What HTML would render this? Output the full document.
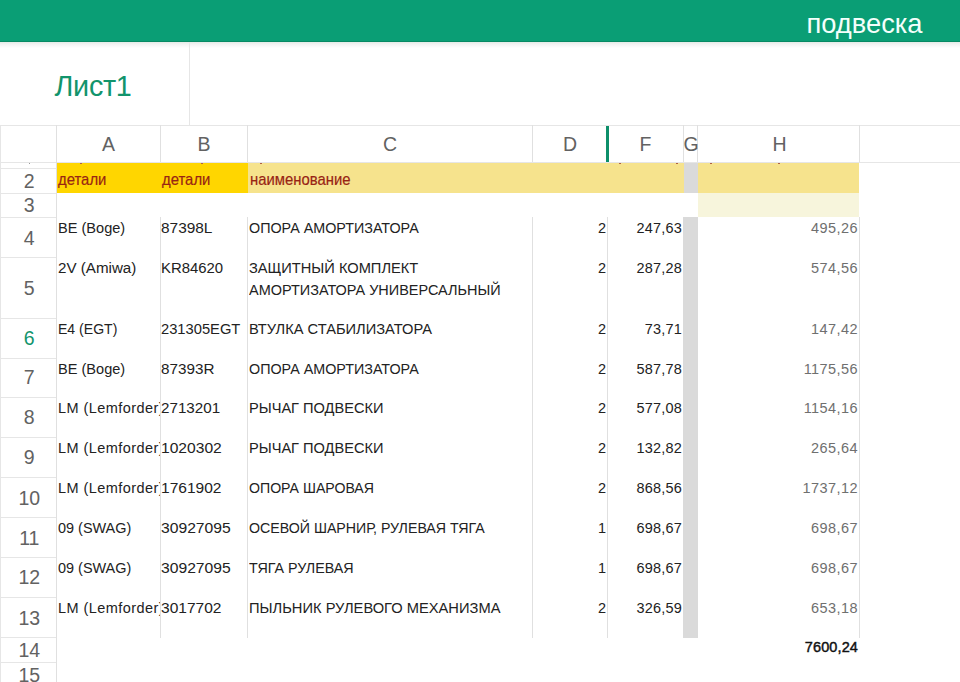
<!DOCTYPE html>
<html><head><meta charset="utf-8"><style>
html,body{margin:0;padding:0;}
body{width:960px;height:682px;overflow:hidden;position:relative;background:#fff;font-family:"Liberation Sans",sans-serif;}
div{position:absolute;box-sizing:border-box;}
.t{white-space:nowrap;line-height:17px;font-size:15.2px;color:#222;transform:scaleX(0.954);transform-origin:0 0;}
.r{text-align:right;transform-origin:100% 0;}
.hl{height:1px;background:#e6e6e6;}
.vl{width:1px;background:#e0e0e0;}
.ch{font-size:19.5px;color:#626262;line-height:22px;text-align:center;}
</style></head><body>

<div style="left:0;top:0;width:960px;height:42px;background:#0a9e75;"></div>
<div style="left:0;top:41px;width:960px;height:1px;background:#078a64;"></div>
<div style="left:0;top:42px;width:960px;height:6px;background:linear-gradient(#e4ebe7,#f3f3f3 40%,#ffffff);"></div>
<div style="left:806.5px;top:6.8px;font-size:27.3px;line-height:34px;color:#f4fffb;white-space:nowrap;">подвеска</div>
<div style="left:54.5px;top:68.5px;font-size:28.8px;line-height:34px;letter-spacing:-0.3px;color:#12946c;white-space:nowrap;">Лист1</div>
<div class="vl" style="left:189px;top:42px;height:83px;background:#e6e6e6;"></div>
<div class="hl" style="left:0;top:125px;width:960px;"></div>
<div class="hl" style="left:0;top:162px;width:960px;"></div>
<div class="vl" style="left:0;top:125px;height:557px;background:#e6e6e6;"></div>
<div class="vl" style="left:56px;top:125px;height:557px;"></div>
<div class="vl" style="left:160px;top:125px;height:37px;"></div>
<div class="vl" style="left:247px;top:125px;height:37px;"></div>
<div class="vl" style="left:532px;top:125px;height:37px;"></div>
<div class="vl" style="left:683px;top:125px;height:37px;"></div>
<div class="vl" style="left:697px;top:125px;height:37px;"></div>
<div class="vl" style="left:859px;top:125px;height:37px;"></div>
<div style="left:606px;top:126px;width:3px;height:36px;background:#0d8f6a;"></div>
<div class="ch" style="left:56.5px;top:133.3px;width:104.0px;">A</div>
<div class="ch" style="left:160.5px;top:133.3px;width:87.0px;">B</div>
<div class="ch" style="left:247.5px;top:133.3px;width:285.0px;">C</div>
<div class="ch" style="left:532.5px;top:133.3px;width:75.0px;">D</div>
<div class="ch" style="left:607.5px;top:133.3px;width:76.0px;">F</div>
<div class="ch" style="left:683.5px;top:133.3px;width:14.0px;">G</div>
<div class="ch" style="left:698.7px;top:133.3px;width:161.5px;">H</div>
<div class="hl" style="left:0;top:168px;width:56px;"></div>
<div class="hl" style="left:0;top:193px;width:56px;"></div>
<div class="ch" style="left:0.8px;top:169.3px;width:57px;height:24.80000000000001px;line-height:24.80000000000001px;color:#626262;">2</div>
<div class="hl" style="left:0;top:217px;width:56px;"></div>
<div class="ch" style="left:0.8px;top:194.10000000000002px;width:57px;height:23.899999999999977px;line-height:23.899999999999977px;color:#626262;">3</div>
<div class="hl" style="left:0;top:257px;width:56px;"></div>
<div class="ch" style="left:0.8px;top:218.0px;width:57px;height:40.0px;line-height:40.0px;color:#626262;">4</div>
<div class="hl" style="left:0;top:318px;width:56px;"></div>
<div class="ch" style="left:0.8px;top:258.0px;width:57px;height:60.30000000000001px;line-height:60.30000000000001px;color:#626262;">5</div>
<div class="hl" style="left:0;top:358px;width:56px;"></div>
<div class="ch" style="left:0.8px;top:318.3px;width:57px;height:40.10000000000002px;line-height:40.10000000000002px;color:#12946c;">6</div>
<div class="hl" style="left:0;top:397px;width:56px;"></div>
<div class="ch" style="left:0.8px;top:358.40000000000003px;width:57px;height:39.799999999999955px;line-height:39.799999999999955px;color:#626262;">7</div>
<div class="hl" style="left:0;top:437px;width:56px;"></div>
<div class="ch" style="left:0.8px;top:398.2px;width:57px;height:39.900000000000034px;line-height:39.900000000000034px;color:#626262;">8</div>
<div class="hl" style="left:0;top:477px;width:56px;"></div>
<div class="ch" style="left:0.8px;top:438.1px;width:57px;height:39.89999999999998px;line-height:39.89999999999998px;color:#626262;">9</div>
<div class="hl" style="left:0;top:517px;width:56px;"></div>
<div class="ch" style="left:0.8px;top:478.0px;width:57px;height:40.099999999999966px;line-height:40.099999999999966px;color:#626262;">10</div>
<div class="hl" style="left:0;top:557px;width:56px;"></div>
<div class="ch" style="left:0.8px;top:518.0999999999999px;width:57px;height:40.0px;line-height:40.0px;color:#626262;">11</div>
<div class="hl" style="left:0;top:597px;width:56px;"></div>
<div class="ch" style="left:0.8px;top:558.0999999999999px;width:57px;height:39.90000000000009px;line-height:39.90000000000009px;color:#626262;">12</div>
<div class="hl" style="left:0;top:637px;width:56px;"></div>
<div class="ch" style="left:0.8px;top:598.0px;width:57px;height:40.0px;line-height:40.0px;color:#626262;">13</div>
<div class="hl" style="left:0;top:662px;width:56px;"></div>
<div class="ch" style="left:0.8px;top:638.0px;width:57px;height:25.0px;line-height:25.0px;color:#626262;">14</div>
<div class="ch" style="left:0.8px;top:663.0px;width:57px;height:24.0px;line-height:24.0px;color:#626262;">15</div>
<div style="left:57px;top:163px;width:191px;height:30px;background:#ffd600;"></div>
<div style="left:248px;top:163px;width:436px;height:30px;background:#f6e38d;"></div>
<div style="left:698px;top:163px;width:161px;height:30px;background:#f6e38d;"></div>
<div style="left:698px;top:193px;width:161px;height:24px;background:#f7f5dc;"></div>
<div style="left:684px;top:163px;width:14px;height:30px;background:#dadada;"></div>
<div style="left:683.3px;top:217px;width:14.5px;height:420.5px;background:#dadada;"></div>
<div class="t" style="left:58px;top:171.2px;font-size:17px;transform:scaleX(0.875);transform-origin:0 0;color:#982414;-webkit-text-stroke:0.2px #982414;">детали</div>
<div class="t" style="left:161.5px;top:171.2px;font-size:17px;transform:scaleX(0.875);transform-origin:0 0;color:#982414;-webkit-text-stroke:0.2px #982414;">детали</div>
<div class="t" style="left:249.5px;top:171.2px;font-size:17px;transform:scaleX(0.875);transform-origin:0 0;color:#982414;-webkit-text-stroke:0.2px #982414;">наименование</div>
<div style="left:80px;top:163px;width:2px;height:1px;background:#b06040;"></div>
<div style="left:201px;top:163px;width:2px;height:1px;background:#b06040;"></div>
<div style="left:260px;top:163px;width:2px;height:1px;background:#b06040;"></div>
<div style="left:619px;top:163px;width:2px;height:1px;background:#b06040;"></div>
<div style="left:676px;top:163px;width:2px;height:1px;background:#b06040;"></div>
<div style="left:710px;top:163px;width:2px;height:1px;background:#b06040;"></div>
<div style="left:778px;top:163px;width:2px;height:1px;background:#b06040;"></div>
<div style="left:28.5px;top:162.5px;width:1.5px;height:1.5px;background:#999;"></div>
<div class="vl" style="left:160px;top:217px;height:421px;"></div>
<div class="vl" style="left:247px;top:217px;height:421px;"></div>
<div class="vl" style="left:532px;top:217px;height:421px;"></div>
<div class="vl" style="left:607px;top:217px;height:421px;"></div>
<div class="vl" style="left:859px;top:217px;height:421px;"></div>
<div class="t" style="left:57.8px;top:219.2px;width:106.93px;overflow:hidden;transform:scaleX(0.959);">BE (Boge)</div>
<div class="t" style="left:161px;top:219.2px;transform:scaleX(1.015);">87398L</div>
<div class="t" style="left:248.6px;top:219.2px;transform:scaleX(0.943);">ОПОРА АМОРТИЗАТОРА</div>
<div class="t r" style="left:540px;top:219.2px;width:66px;">2</div>
<div class="t r" style="left:610px;top:219.2px;width:72px;letter-spacing:0.2px;">247,63</div>
<div class="t r" style="left:700px;top:219.2px;width:158px;color:#6f6f6f;letter-spacing:0.45px;">495,26</div>
<div class="t" style="left:57.8px;top:259.2px;width:102.76px;overflow:hidden;transform:scaleX(0.998);">2V (Amiwa)</div>
<div class="t" style="left:161px;top:259.2px;transform:scaleX(0.981);">KR84620</div>
<div class="t" style="left:248.6px;top:259.2px;transform:scaleX(0.964);">ЗАЩИТНЫЙ КОМПЛЕКТ</div>
<div class="t" style="left:248.6px;top:280.5px;transform:scaleX(0.952);">АМОРТИЗАТОРА УНИВЕРСАЛЬНЫЙ</div>
<div class="t r" style="left:540px;top:259.2px;width:66px;">2</div>
<div class="t r" style="left:610px;top:259.2px;width:72px;letter-spacing:0.2px;">287,28</div>
<div class="t r" style="left:700px;top:259.2px;width:158px;color:#6f6f6f;letter-spacing:0.45px;">574,56</div>
<div class="t" style="left:57.8px;top:319.5px;width:110.86px;overflow:hidden;transform:scaleX(0.925);">E4 (EGT)</div>
<div class="t" style="left:161px;top:319.5px;transform:scaleX(0.969);">231305EGT</div>
<div class="t" style="left:248.6px;top:319.5px;transform:scaleX(0.965);">ВТУЛКА СТАБИЛИЗАТОРА</div>
<div class="t r" style="left:540px;top:319.5px;width:66px;">2</div>
<div class="t r" style="left:610px;top:319.5px;width:72px;letter-spacing:0.2px;">73,71</div>
<div class="t r" style="left:700px;top:319.5px;width:158px;color:#6f6f6f;letter-spacing:0.45px;">147,42</div>
<div class="t" style="left:57.8px;top:359.6px;width:106.93px;overflow:hidden;transform:scaleX(0.959);">BE (Boge)</div>
<div class="t" style="left:161px;top:359.6px;transform:scaleX(1.004);">87393R</div>
<div class="t" style="left:248.6px;top:359.6px;transform:scaleX(0.943);">ОПОРА АМОРТИЗАТОРА</div>
<div class="t r" style="left:540px;top:359.6px;width:66px;">2</div>
<div class="t r" style="left:610px;top:359.6px;width:72px;letter-spacing:0.2px;">587,78</div>
<div class="t r" style="left:700px;top:359.6px;width:158px;color:#6f6f6f;letter-spacing:0.45px;">1175,56</div>
<div class="t" style="left:57.8px;top:399.4px;width:107.49px;overflow:hidden;transform:scaleX(0.954);letter-spacing:0.47px;">LM (Lemforder)</div>
<div class="t" style="left:161px;top:399.4px;transform:scaleX(0.999);">2713201</div>
<div class="t" style="left:248.6px;top:399.4px;transform:scaleX(0.961);">РЫЧАГ ПОДВЕСКИ</div>
<div class="t r" style="left:540px;top:399.4px;width:66px;">2</div>
<div class="t r" style="left:610px;top:399.4px;width:72px;letter-spacing:0.2px;">577,08</div>
<div class="t r" style="left:700px;top:399.4px;width:158px;color:#6f6f6f;letter-spacing:0.45px;">1154,16</div>
<div class="t" style="left:57.8px;top:439.3px;width:107.49px;overflow:hidden;transform:scaleX(0.954);letter-spacing:0.47px;">LM (Lemforder)</div>
<div class="t" style="left:161px;top:439.3px;transform:scaleX(1.028);">1020302</div>
<div class="t" style="left:248.6px;top:439.3px;transform:scaleX(0.961);">РЫЧАГ ПОДВЕСКИ</div>
<div class="t r" style="left:540px;top:439.3px;width:66px;">2</div>
<div class="t r" style="left:610px;top:439.3px;width:72px;letter-spacing:0.2px;">132,82</div>
<div class="t r" style="left:700px;top:439.3px;width:158px;color:#6f6f6f;letter-spacing:0.45px;">265,64</div>
<div class="t" style="left:57.8px;top:479.2px;width:107.49px;overflow:hidden;transform:scaleX(0.954);letter-spacing:0.47px;">LM (Lemforder)</div>
<div class="t" style="left:161px;top:479.2px;transform:scaleX(1.023);">1761902</div>
<div class="t" style="left:248.6px;top:479.2px;transform:scaleX(0.93);">ОПОРА ШАРОВАЯ</div>
<div class="t r" style="left:540px;top:479.2px;width:66px;">2</div>
<div class="t r" style="left:610px;top:479.2px;width:72px;letter-spacing:0.2px;">868,56</div>
<div class="t r" style="left:700px;top:479.2px;width:158px;color:#6f6f6f;letter-spacing:0.45px;">1737,12</div>
<div class="t" style="left:57.8px;top:519.3px;width:107.83px;overflow:hidden;transform:scaleX(0.951);">09 (SWAG)</div>
<div class="t" style="left:161px;top:519.3px;transform:scaleX(1.032);">30927095</div>
<div class="t" style="left:248.6px;top:519.3px;transform:scaleX(0.934);">ОСЕВОЙ ШАРНИР, РУЛЕВАЯ ТЯГА</div>
<div class="t r" style="left:540px;top:519.3px;width:66px;">1</div>
<div class="t r" style="left:610px;top:519.3px;width:72px;letter-spacing:0.2px;">698,67</div>
<div class="t r" style="left:700px;top:519.3px;width:158px;color:#6f6f6f;letter-spacing:0.45px;">698,67</div>
<div class="t" style="left:57.8px;top:559.3px;width:107.83px;overflow:hidden;transform:scaleX(0.951);">09 (SWAG)</div>
<div class="t" style="left:161px;top:559.3px;transform:scaleX(1.032);">30927095</div>
<div class="t" style="left:248.6px;top:559.3px;transform:scaleX(0.941);">ТЯГА РУЛЕВАЯ</div>
<div class="t r" style="left:540px;top:559.3px;width:66px;">1</div>
<div class="t r" style="left:610px;top:559.3px;width:72px;letter-spacing:0.2px;">698,67</div>
<div class="t r" style="left:700px;top:559.3px;width:158px;color:#6f6f6f;letter-spacing:0.45px;">698,67</div>
<div class="t" style="left:57.8px;top:599.2px;width:107.49px;overflow:hidden;transform:scaleX(0.954);letter-spacing:0.47px;">LM (Lemforder)</div>
<div class="t" style="left:161px;top:599.2px;transform:scaleX(1.023);">3017702</div>
<div class="t" style="left:248.6px;top:599.2px;transform:scaleX(0.967);">ПЫЛЬНИК РУЛЕВОГО МЕХАНИЗМА</div>
<div class="t r" style="left:540px;top:599.2px;width:66px;">2</div>
<div class="t r" style="left:610px;top:599.2px;width:72px;letter-spacing:0.2px;">326,59</div>
<div class="t r" style="left:700px;top:599.2px;width:158px;color:#6f6f6f;letter-spacing:0.45px;">653,18</div>
<div class="t r" style="left:700px;top:638.2px;width:158px;font-size:15.2px;letter-spacing:0.12px;-webkit-text-stroke:0.45px #111;color:#111;">7600,24</div>
</body></html>
